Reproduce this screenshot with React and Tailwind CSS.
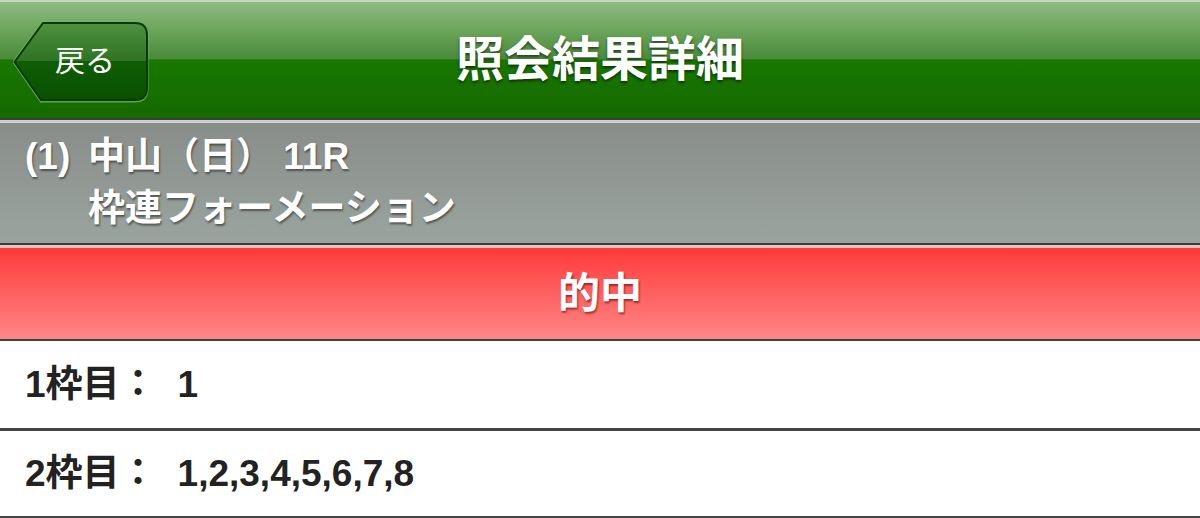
import React from "react";

const FONT = "font-['Liberation_Sans','Noto_Sans_CJK_JP',sans-serif]";

function BackButton() {
  return (
    <div className="absolute left-[13px] top-[19px] w-[136px] h-[82px]">
      <svg className="absolute inset-0" width="136" height="82" viewBox="0 0 136 82">
        <defs>
          <linearGradient id="bb" x1="0" y1="0" x2="0" y2="1">
            <stop offset="0" stopColor="#4f913f" />
            <stop offset="0.5" stopColor="#2e7323" />
            <stop offset="0.5" stopColor="#0f5e04" />
            <stop offset="1" stopColor="#0a4f00" />
          </linearGradient>
        </defs>
        <path
          d="M30 2 H122 Q134 2 134 14 V68 Q134 80 122 80 H28 L1 41 Z"
          fill="none"
          stroke="#7cc06a"
          strokeOpacity="0.7"
          strokeWidth="3"
        />
        <path
          d="M30 2 H122 Q134 2 134 14 V67 Q134 79 122 79 H28 L1.5 41 Z"
          fill="url(#bb)"
          stroke="#0a3805"
          strokeWidth="2"
        />
      </svg>
      <div className="relative flex h-full items-center pl-[42px] pb-[2px] text-[30px] font-normal leading-none text-white">
        戻る
      </div>
    </div>
  );
}

function Row({ label, value, last }) {
  return (
    <div
      className={
        "flex items-center pl-[25px] bg-white text-[37px] font-bold text-[#222] " +
        (last ? "h-[87px] border-b-2 border-[#444]" : "h-[90px] border-b-[3px] border-[#444]")
      }
    >
      <span>{label}</span>
      <span className="ml-[21px]">{value}</span>
    </div>
  );
}

export default function App() {
  return (
    <div className={"w-[1200px] h-[518px] overflow-hidden bg-white " + FONT}>
      {/* Header */}
      <div className="relative flex h-[120px] items-center justify-center border-t-2 border-b-2 border-t-[#c9d6c5] border-b-[#3b3b3b] bg-[linear-gradient(to_bottom,#8ebc80_0%,#6aa45a_25%,#4a8a3a_49%,#187800_50%,#156900_100%)]">
        <BackButton />
        <h1 className="text-[48px] font-bold leading-none text-white [text-shadow:0_2px_3px_rgba(0,0,0,0.55)]">
          照会結果詳細
        </h1>
      </div>

      {/* Race info */}
      <div className="flex h-[125px] items-center border-t-[3px] border-b-2 border-t-[#c9d0cf] border-b-[#3d3d3d] bg-[linear-gradient(to_bottom,#898d89,#9aa49f)] pl-[25px] text-[37px] font-bold leading-[52px] text-white [text-shadow:1px_2px_2px_rgba(0,0,0,0.45)]">
        <div className="flex">
          <span className="w-[63px] shrink-0">(1)</span>
          <div className="flex flex-col">
            <span>中山（日） 11R</span>
            <span>枠連フォーメーション</span>
          </div>
        </div>
      </div>

      {/* Hit banner */}
      <div className="flex h-[96px] items-center justify-center border-t-[3px] border-b-2 border-t-[#f3c2c2] border-b-[#404040] bg-[linear-gradient(to_bottom,#ff3a3a,#ff8686)]">
        <span className="text-[42px] font-bold leading-none text-white [text-shadow:1px_2px_2px_rgba(110,0,0,0.6)]">
          的中
        </span>
      </div>

      <Row label="1枠目：" value="1" />
      <Row label="2枠目：" value="1,2,3,4,5,6,7,8" last />
    </div>
  );
}
